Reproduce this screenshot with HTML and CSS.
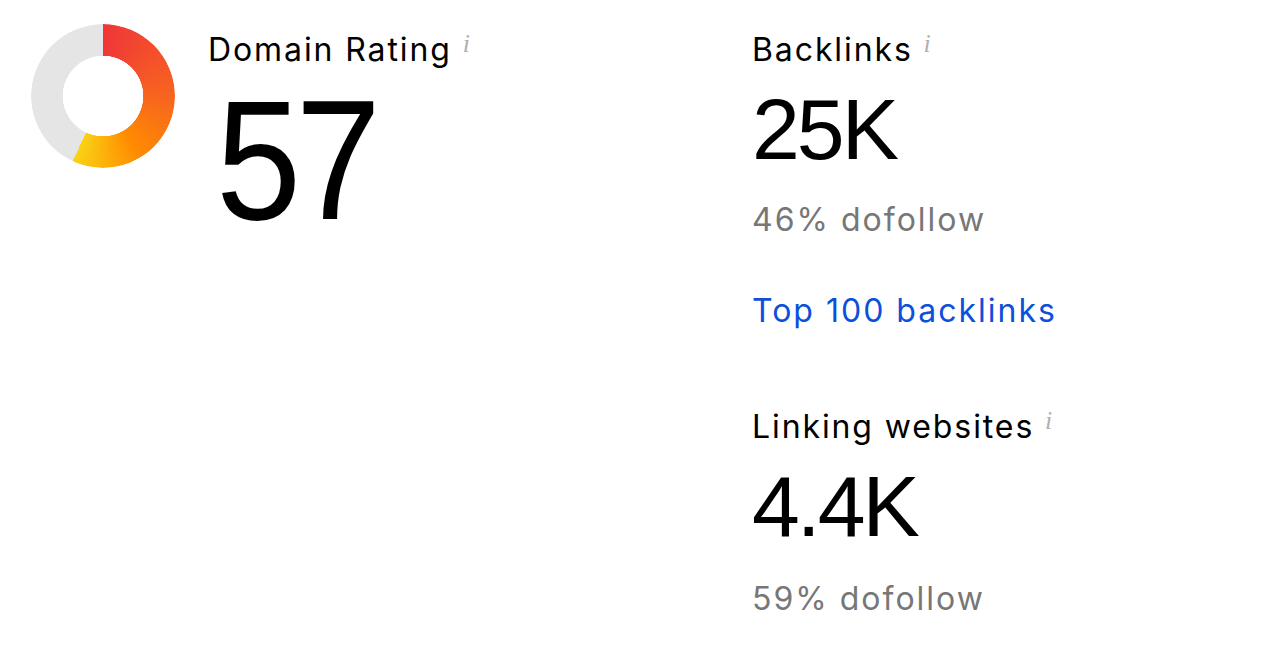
FILE: index.html
```html
<!DOCTYPE html>
<html lang="en">
<head>
    <meta charset="UTF-8">
    <meta name="viewport" content="width=device-width, initial-scale=1.0">
    <title>Website Authority</title>
    <link rel="stylesheet" href="styles.css">
</head>
<body>

    <div class="overview">
        <!-- domain rating with donut -->
        <div class="rating">
            <div class="donut"></div>
            <div class="metric">
                <div class="label">Domain Rating <span class="info">i</span></div>
                <div class="value big">57</div>
            </div>
        </div>

        <div class="side">
            <div class="metric">
                <div class="label">Backlinks <span class="info">i</span></div>
                <div class="value">25K</div>
                <div class="sub">46% dofollow</div>
                <a class="link" href="#">Top 100 backlinks</a>
            </div>

            <div class="metric second">
                <div class="label">Linking websites <span class="info">i</span></div>
                <div class="value">4.4K</div>
                <div class="sub">59% dofollow</div>
            </div>
        </div>
    </div>

</body>
</html>
```

FILE: styles.css
```css
body {
    margin: 0;
    background: #fff;
    color: #000;
    font-family: 'Inter', 'Liberation Sans', sans-serif;
}

.overview {
    display: flex;
    padding: 28px 0 0 31px;
}

.rating {
    display: flex;
    width: 721px;
    gap: 33px;
    align-items: flex-start;
}

.donut {
    width: 144px;
    height: 144px;
    margin-top: -4px;
    border-radius: 50%;
    background: conic-gradient(#ef3639 0deg, #f7641f 90deg, #ff8c00 150deg, #fad315 205deg, #e5e5e5 205deg);
    -webkit-mask: radial-gradient(circle, transparent 40px, #000 40.5px);
    mask: radial-gradient(circle, transparent 40px, #000 40.5px);
}

.label {
    font-size: 32px;
    line-height: 44px;
    letter-spacing: 1.9px;
}

.info {
    font-family: 'Liberation Serif', serif;
    font-style: italic;
    font-size: 26px;
    line-height: 0;
    color: #b0b0b0;
    vertical-align: 9px;
    letter-spacing: 0;
}

.value {
    font-family: 'Liberation Sans', sans-serif;
    font-size: 86px;
    line-height: 114px;
    letter-spacing: -3px;
}

.value.big {
    font-size: 170px;
    line-height: 176px;
    letter-spacing: -6px;
    margin-left: 8px;
    transform: scaleX(0.9);
    transform-origin: left center;
}

.sub {
    margin-top: 12px;
    font-size: 32px;
    line-height: 44px;
    letter-spacing: 2px;
    color: #777;
}

.second .sub {
    margin-top: 14px;
}

.link {
    display: block;
    margin-top: 47px;
    font-size: 32px;
    line-height: 44px;
    letter-spacing: 2px;
    color: #0b4fdb;
    text-decoration: none;
}

.second {
    margin-top: 72px;
}
```
